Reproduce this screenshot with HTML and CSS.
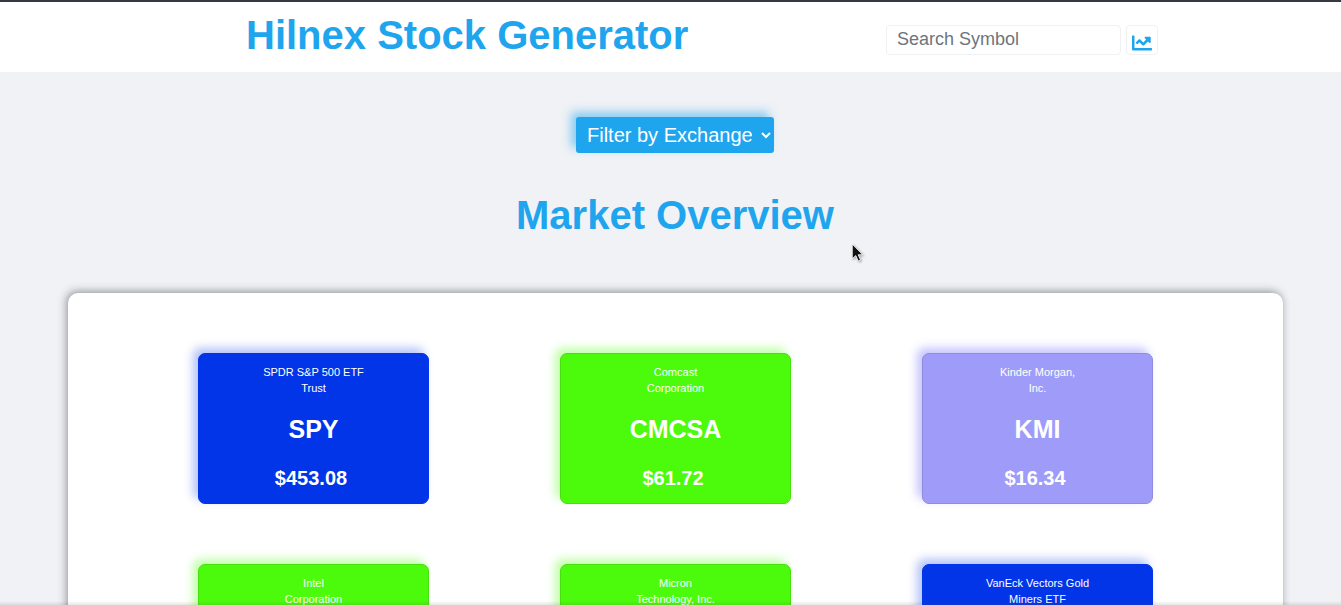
FILE: index.html
```html
<!DOCTYPE html>
<html lang="en">
<head>
<meta charset="utf-8">
<title>Hilnex Stock Generator</title>
<link rel="stylesheet" href="styles.css">
</head>
<body>
<header class="topbar">
  <div class="brand-wrap"><h1 class="brand">Hilnex Stock Generator</h1></div>
  <form class="search">
    <input class="search-input" type="text" placeholder="Search Symbol">
    <button class="search-btn" type="button" aria-label="Search">
      <svg class="chart-icon" viewBox="0 0 512 512"><path d="M496 384H64V79c0-8.84-7.16-16-16-16H16C7.16 63 0 70.16 0 79v336c0 17.67 14.33 32 32 32h464c8.84 0 16-7.16 16-16v-32c0-8.84-7.16-16-16-16zM464 96H345.94c-21.38 0-32.09 25.85-16.97 40.97l32.4 32.4L288 242.75l-73.37-73.37c-12.5-12.5-32.76-12.5-45.25 0l-68.69 68.69c-6.25 6.25-6.25 16.38 0 22.63l22.62 22.62c6.25 6.25 16.38 6.25 22.63 0L192 237.25l73.37 73.37c12.5 12.5 32.76 12.5 45.25 0l96-96 32.4 32.4c15.12 15.12 40.97 4.41 40.97-16.97V112c.01-8.84-7.15-16-16.01-16z"/></svg>
    </button>
  </form>
</header>
<main class="content">
  <div class="filter-row">
    <select class="filter"><option>Filter by Exchange</option></select>
  </div>
  <h2 class="heading">Market Overview</h2>
  <section class="panel">
    <div class="grid">
      <article class="card blue"><p class="name">SPDR S&amp;P 500 ETF<br>Trust</p><p class="symbol">SPY</p><p class="price">$453.08</p></article>
      <article class="card green"><p class="name">Comcast<br>Corporation</p><p class="symbol">CMCSA</p><p class="price">$61.72</p></article>
      <article class="card violet"><p class="name">Kinder Morgan,<br>Inc.</p><p class="symbol">KMI</p><p class="price">$16.34</p></article>
      <article class="card green"><p class="name">Intel<br>Corporation</p></article>
      <article class="card green"><p class="name">Micron<br>Technology, Inc.</p></article>
      <article class="card blue"><p class="name">VanEck Vectors Gold<br>Miners ETF</p></article>
    </div>
  </section>
</main>
<svg class="cursor" viewBox="0 0 12 20"><path d="M1 1v14l3.4-3 2.2 5.2 2.3-1-2.2-5H11z" fill="#111" stroke="#fff" stroke-width=".8"/></svg>
<div class="bottom-edge"></div>
</body>
</html>
```
FILE: styles.css
```css
* { box-sizing: border-box; }
html, body { height: 605px; overflow: hidden; }
body {
  margin: 0;
  background: #f0f2f6;
  font-family: "Liberation Sans", Arial, sans-serif;
  color: #fff;
}
.topbar {
  height: 72px;
  background: #fff;
  border-top: 2px solid #343a40;
  display: flex;
}
.brand-wrap {
  width: 886px;
  padding-left: 246px;
}
.brand {
  margin: 9px 0 0;
  font-size: 40px;
  line-height: 48px;
  font-weight: 700;
  color: #1fa5ee;
  white-space: nowrap;
}
.search {
  display: flex;
  gap: 5px;
  margin-top: 23px;
}
.search-input {
  width: 235px;
  height: 30px;
  padding: 0 10px 2px;
  border: 1px solid #f0f1f4;
  border-radius: 4px;
  background: #fff;
  font: 18px "Liberation Sans", Arial, sans-serif;
  color: #6c757d;
  outline: none;
}
.search-input::placeholder { color: #6c757d; opacity: 1; }
.search-btn {
  width: 32px;
  height: 30px;
  padding: 7px 0 0;
  border: 1px solid #f0f1f4;
  border-radius: 4px;
  background: #fff;
  display: flex;
  justify-content: center;
  align-items: flex-start;
}
.chart-icon { width: 20px; height: 20px; fill: #1fa5ee; display: block; }
.content { height: 533px; overflow: hidden; padding-left: 9px; }
.filter-row {
  display: flex;
  justify-content: center;
  padding-top: 45px;
}
.filter {
  width: 198px;
  height: 36px;
  padding: 0 6px 0 7px;
  border: none;
  border-radius: 3px;
  background: #1fa5ee;
  color: #fff;
  font: 20px "Liberation Sans", Arial, sans-serif;
  box-shadow: -5px -5px 10px rgba(31, 165, 238, .5);
}
.heading {
  margin: 38px 0 0;
  text-align: center;
  font-size: 40px;
  line-height: 48px;
  font-weight: 700;
  color: #1fa5ee;
}
.panel {
  margin: 54px 58px 0 59px;
  height: 600px;
  padding: 60px 130px 0;
  background: #fff;
  border-radius: 10px;
  box-shadow: -2px -2px 8px rgba(60, 60, 65, .42), 1px 0 6px rgba(60, 60, 65, .12);
}
.grid {
  display: grid;
  grid-template-columns: repeat(3, 231px);
  justify-content: space-between;
  row-gap: 60px;
}
.card {
  height: 151px;
  padding: 10px 16px 0;
  border-radius: 7px;
  border: 1px solid transparent;
  text-align: center;
}
.card p { margin: 0; }
.blue { background: #0235e8; border-color: #0235e8; box-shadow: -5px -5px 10px rgba(2, 52, 232, .3); }
.green { background: #4cfa0c; border-color: #46e00f; box-shadow: -5px -5px 10px rgba(76, 251, 10, .35); }
.violet { background: #9f9cf9; border-color: #8f8ce0; box-shadow: -5px -5px 10px rgba(110, 105, 250, .4); }
.name { font-size: 11px; line-height: 16px; }
.symbol { margin-top: 18px !important; font-size: 25px; line-height: 30px; font-weight: 700; }
.price { margin-top: 22px !important; font-size: 20px; line-height: 24px; font-weight: 700; padding-right: 5px; }
.cursor {
  position: absolute;
  left: 851px;
  top: 243px;
  width: 13px;
  height: 21px;
  filter: drop-shadow(1px 1px 1px rgba(0, 0, 0, .35));
}
.bottom-edge {
  position: fixed;
  left: 0;
  right: 0;
  bottom: 0;
  height: 4px;
  background: linear-gradient(to bottom, rgba(80, 80, 80, 0), rgba(80, 80, 80, .14));
}
```
